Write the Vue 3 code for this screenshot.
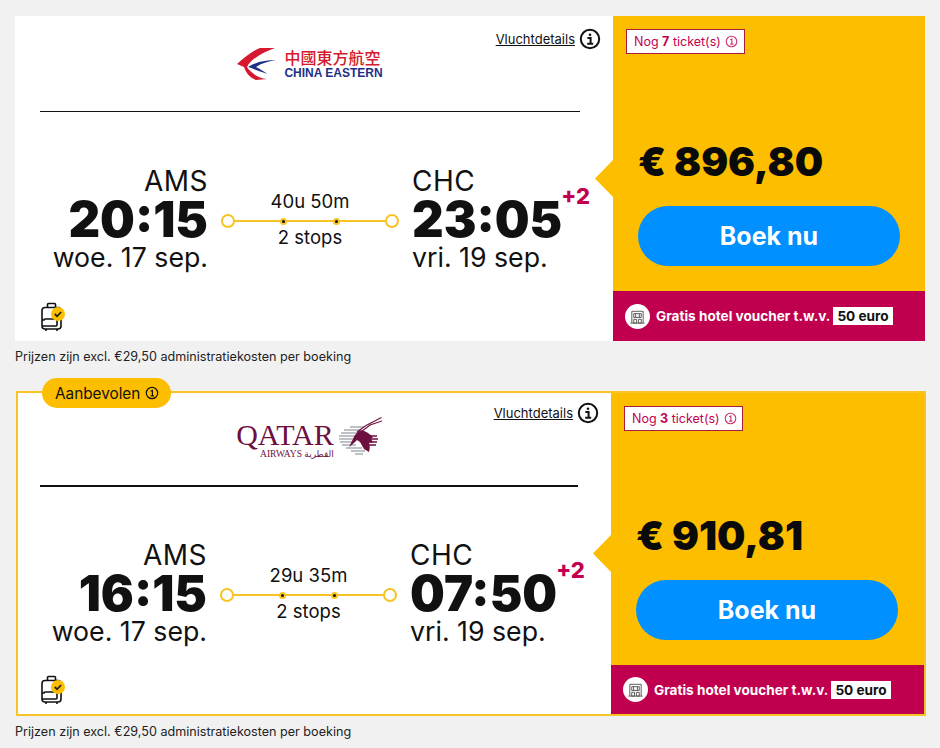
<script setup>
const flights = [
  { id: 1, featured: false, airline: 'china', dep: '20:15', arr: '23:05', duration: '40u 50m', tickets: 7, price: '€ 896,80' },
  { id: 2, featured: true, airline: 'qatar', dep: '16:15', arr: '07:50', duration: '29u 35m', tickets: 3, price: '€ 910,81' },
]
</script>

<template>
  <main class="page">
    <section v-for="f in flights" :key="f.id" class="offer">
      <article class="card" :class="{ featured: f.featured }">
        <div v-if="f.featured" class="recommended">
          <span>Aanbevolen</span>
          <svg class="mini-info" viewBox="0 0 14 14"><circle cx="7" cy="7" r="5.7" /><path d="M5.6 5.2 7.4 4.4V9.8M5.6 9.8H9" /></svg>
        </div>
        <div class="left">
          <header class="head">
            <div class="logo">
              <div v-if="f.airline === 'china'" class="china">
                <svg class="china-mark" viewBox="0 0 40 34">
                  <path fill="#d6192e" d="M38 1H23C15 4 7 11 0 17l7 3c2 6 6 11 12 13l11-1c-9-1-16-6-20-12C14 12 26 5 38 1Z" />
                  <path fill="#1f2f86" d="M39 13C28 13 19 15 11 20c6 2 13 5 20 7-5-3-10-6-12-7 6-4 13-6 20-7Z" />
                </svg>
                <div class="china-text">
                  <span class="china-cn">中國東方航空</span>
                  <span class="china-en">CHINA EASTERN</span>
                </div>
              </div>
              <div v-else class="qatar">
                <div class="qatar-text">
                  <span class="qatar-name">QATAR</span>
                  <span class="qatar-sub">AIRWAYS <span class="qatar-ar">القطرية</span></span>
                </div>
                <svg class="qatar-mark" viewBox="0 0 44 40">
                  <path stroke="#a9adb3" stroke-width="1.4" d="M12 10h14M6 13h18M3 16h18M1 19h18M1 22h15M2 25h13M4 28h14M8 31h16M13 34h14M17 37h8" />
                  <path stroke="#6d0f3f" stroke-width="1.6" d="M30 19h9M32 22h8M32 25h7M31 28h7" />
                  <path fill="none" stroke="#6d0f3f" stroke-width="1.1" d="M43.500.500 28 8.500 19 15M44 4 32 8l-9 7" />
                  <path fill="#6d0f3f" d="M21 14c-3 2-5 5-6 8l-4 8c3-2 6-5 8-7l3 2 4 7 5 3c1-3 1-7 0-9l4-1-2-3 2-2-5-4c-3-2-6-3-9-2Z" />
                </svg>
              </div>
            </div>
            <div class="details">
              <a class="details-link">Vluchtdetails</a>
              <svg class="info" viewBox="0 0 22 22"><circle cx="11" cy="11" r="9.2" /><circle class="dot" cx="11" cy="6.8" r="1.3" /><path d="M8.4 10h3.2v5.6M8.2 15.8h6" /></svg>
            </div>
          </header>
          <hr class="rule" />
          <div class="route">
            <div class="point dep">
              <div class="code">AMS</div>
              <div class="time">{{ f.dep }}</div>
              <div class="date">woe. 17 sep.</div>
            </div>
            <div class="stops">
              <div class="stop-text">{{ f.duration }}</div>
              <div class="track">
                <span class="end"></span>
                <span class="stop"></span>
                <span class="stop"></span>
                <span class="end"></span>
              </div>
              <div class="stop-text">2 stops</div>
            </div>
            <div class="point arr">
              <div class="code">CHC</div>
              <div class="time">{{ f.arr }}<span class="plus">+2</span></div>
              <div class="date">vri. 19 sep.</div>
            </div>
          </div>
          <svg class="luggage" viewBox="0 0 26 30">
            <path class="bag" d="M5 5.500h13a3 3 0 0 1 3 3v15.500a3 3 0 0 1-3 3H5a3 3 0 0 1-3-3V8.500a3 3 0 0 1 3-3Z" />
            <path class="bag" d="M7.500 5.500V2.500a1 1 0 0 1 1-1h6a1 1 0 0 1 1 1v3M6 27v2M17 27v2" />
            <path class="bag" d="M2 18h2a1 1 0 0 1 1-1h11a1 1 0 0 1 1 1v5a1 1 0 0 1-1 1H2" />
            <circle cx="18" cy="12" r="7" fill="#fdbe00" />
            <path class="check" d="m14.800 12 2.300 2.300 4-4.300" />
          </svg>
        </div>
        <aside class="right">
          <div class="main">
            <div class="tickets">
              <span>Nog <b>{{ f.tickets }}</b> ticket(s)</span>
              <svg class="mini-info" viewBox="0 0 14 14"><circle cx="7" cy="7" r="5.700" /><path d="M5.600 5.200 7.400 4.400V9.800M5.600 9.800H9" /></svg>
            </div>
            <div class="price">{{ f.price }}</div>
            <button class="book" type="button">Boek nu</button>
          </div>
          <div class="voucher">
            <span class="hotel">
              <svg viewBox="0 0 18 18"><path d="M3 16V3.500h12V16M1.500 16h15M5 6h8v4H5zM7 6v4M11 6v4M5 12h3v4H5zM10 12h3v4h-3z" /></svg>
            </span>
            <span class="voucher-text">Gratis hotel voucher t.w.v.</span>
            <span class="voucher-amount">50 euro</span>
          </div>
        </aside>
      </article>
      <p class="note">Prijzen zijn excl. €29,50 administratiekosten per boeking</p>
    </section>
  </main>
</template>

<style>
html, body { margin: 0; background: #f1f1f1; }
</style>

<style scoped>
.page {
  box-sizing: border-box;
  width: 940px;
  height: 748px;
  padding: 16px 15px 0;
  background: #f1f1f1;
  color: #111;
  font-family: Inter, "Noto Sans", sans-serif;
  overflow: hidden;
}
.offer { height: 375px; }
.card {
  position: relative;
  box-sizing: border-box;
  display: flex;
  width: 910px;
  height: 325px;
  background: #fff;
}
.card.featured { margin-left: 1px; border: 2px solid #f7c325; }

.recommended {
  position: absolute;
  left: 24px;
  top: -15px;
  box-sizing: border-box;
  display: flex;
  align-items: center;
  gap: 5px;
  width: 129px;
  height: 30px;
  padding-left: 13px;
  border-radius: 15px;
  background: #fdbe00;
  font-size: 15.300px;
}
.mini-info { width: 14px; height: 14px; fill: none; stroke: currentColor; stroke-width: 1.200; flex: none; }

.left {
  flex: 1;
  min-width: 0;
  display: flex;
  flex-direction: column;
  padding: 0 33px 0 25px;
}
.featured .left { padding-left: 22px; }

.head {
  display: grid;
  grid-template-columns: 1fr auto 1fr;
  height: 95px;
}
.featured .head { height: 92px; }
.logo { grid-column: 2; display: flex; align-items: flex-start; padding-top: 31px; }
.featured .logo { padding-top: 25px; }
.details {
  grid-column: 3;
  justify-self: end;
  align-self: start;
  display: flex;
  align-items: center;
  gap: 4px;
  margin: 12px -21px 0 0;
}
.featured .details { margin-top: 9px; }
.details-link { font-size: 13px; text-decoration: underline; color: #111; }
.info { width: 22px; height: 22px; fill: none; stroke: #111; stroke-width: 2; }
.info .dot { fill: #111; stroke: none; }

.china { display: flex; gap: 7px; align-items: center; }
.china-mark { width: 40px; height: 34px; }
.china-text { display: flex; flex-direction: column; }
.china-cn {
  font-family: "Noto Sans CJK TC", sans-serif;
  font-size: 16px;
  line-height: 18px;
  font-weight: 500;
  color: #d6192e;
}
.china-en {
  font-family: "Liberation Sans", sans-serif;
  font-size: 12px;
  line-height: 14px;
  font-weight: 700;
  color: #1f2f86;
}
.qatar { display: flex; gap: 4px; align-items: flex-start; }
.qatar-text { display: flex; flex-direction: column; align-items: flex-end; padding-top: 2px; }
.qatar-name {
  font-family: "Liberation Serif", serif;
  font-size: 30px;
  line-height: 30px;
  color: #6d0f3f;
}
.qatar-sub {
  font-family: "Liberation Serif", serif;
  font-size: 9.500px;
  line-height: 9px;
  color: #6d0f3f;
}
.qatar-ar { font-family: "DejaVu Sans", sans-serif; font-size: 9px; }
.qatar-mark { width: 44px; height: 40px; margin-top: -1px; }

.rule { margin: 0; border: 0; height: 1px; background: #111; }
.featured .rule { height: 2px; }

.route {
  display: grid;
  grid-template-columns: 168px 1fr 168px;
  column-gap: 13px;
  margin-top: 54px;
}
.featured .route { margin-top: 53px; grid-template-columns: 167px 1fr 168px; }
.dep { text-align: right; }
.code { font-size: 28px; line-height: 30px; letter-spacing: 0.500px; }
.time { font-size: 49px; line-height: 44px; margin-top: 2px; font-weight: 900; white-space: nowrap; }
.date { font-size: 26.700px; line-height: 30px; white-space: nowrap; }
.plus {
  position: relative;
  top: -33px;
  font-size: 22px;
  font-weight: 800;
  color: #c2004f;
  margin-left: -1px;
  line-height: 0;
}
.stops { display: flex; flex-direction: column; align-items: center; padding-top: 24px; }
.stop-text { font-size: 18.500px; line-height: 22px; }
.track {
  align-self: stretch;
  display: flex;
  align-items: center;
  justify-content: space-between;
  height: 14px;
  margin-top: 2px;
  background: linear-gradient(#f7c325, #f7c325) center / 100% 2px no-repeat;
}
.track + .stop-text { margin-top: -2px; }
.end {
  box-sizing: border-box;
  width: 14px;
  height: 14px;
  border: 2px solid #f7c325;
  border-radius: 50%;
  background: #fff;
}
.stop {
  width: 3px;
  height: 3px;
  border: 2px solid #f7c325;
  border-radius: 50%;
  background: #111;
}
.luggage { width: 26px; height: 30px; margin-top: auto; margin-bottom: 9px; flex: none; }
.bag { fill: none; stroke: #111; stroke-width: 1.600; }
.check { fill: none; stroke: #222; stroke-width: 1.800; }

.right {
  position: relative;
  display: flex;
  flex-direction: column;
  width: 312px;
  flex: none;
  background: #fdbe00;
}
.featured .right { width: 313px; }
.right::before {
  content: "";
  position: absolute;
  left: -18px;
  top: 144px;
  width: 18px;
  height: 37px;
  background: #fdbe00;
  clip-path: polygon(100% 0, 100% 100%, 0 50%);
}
.featured .right::before { top: 142px; }
.main {
  flex: 1;
  display: flex;
  flex-direction: column;
  align-items: flex-start;
  padding: 13px 25px 25px;
}
.tickets {
  box-sizing: border-box;
  display: flex;
  align-items: center;
  gap: 4px;
  height: 25px;
  width: 119px;
  margin-left: -12px;
  padding-left: 7px;
  border: 1px solid #a81c3c;
  background: #fff;
  color: #c2004f;
  font-size: 12.500px;
  white-space: nowrap;
}
.tickets .mini-info { width: 13px; height: 13px; opacity: 0.8; }
.price {
  margin-top: auto;
  margin-bottom: 21px;
  font-size: 40px;
  line-height: 46px;
  font-weight: 900;
  color: #0a0a0a;
  white-space: nowrap;
}
.book {
  width: 262px;
  height: 60px;
  flex: none;
  border: 0;
  border-radius: 30px;
  background: #0090ff;
  color: #fff;
  font-family: inherit;
  font-size: 25px;
  font-weight: 700;
}
.voucher {
  box-sizing: border-box;
  display: flex;
  align-items: center;
  height: 50px;
  flex: none;
  padding-left: 12px;
  background: #c0004f;
  color: #fff;
  font-size: 13.600px;
  font-weight: 700;
}
.featured .voucher { height: 49px; }
.hotel {
  display: flex;
  align-items: center;
  justify-content: center;
  width: 25px;
  height: 25px;
  margin-right: 6px;
  border-radius: 50%;
  background: #fff;
}
.hotel svg { width: 17px; height: 17px; fill: none; stroke: #555; stroke-width: 1; }
.voucher-text { white-space: nowrap; }
.voucher-amount {
  margin-left: 3px;
  padding: 0 4px;
  line-height: 18px;
  background: #fff;
  color: #111;
  white-space: nowrap;
}
.note {
  margin: 8px 0 0;
  font-size: 12.600px;
  line-height: 16px;
  color: #222;
  white-space: nowrap;
}
</style>
